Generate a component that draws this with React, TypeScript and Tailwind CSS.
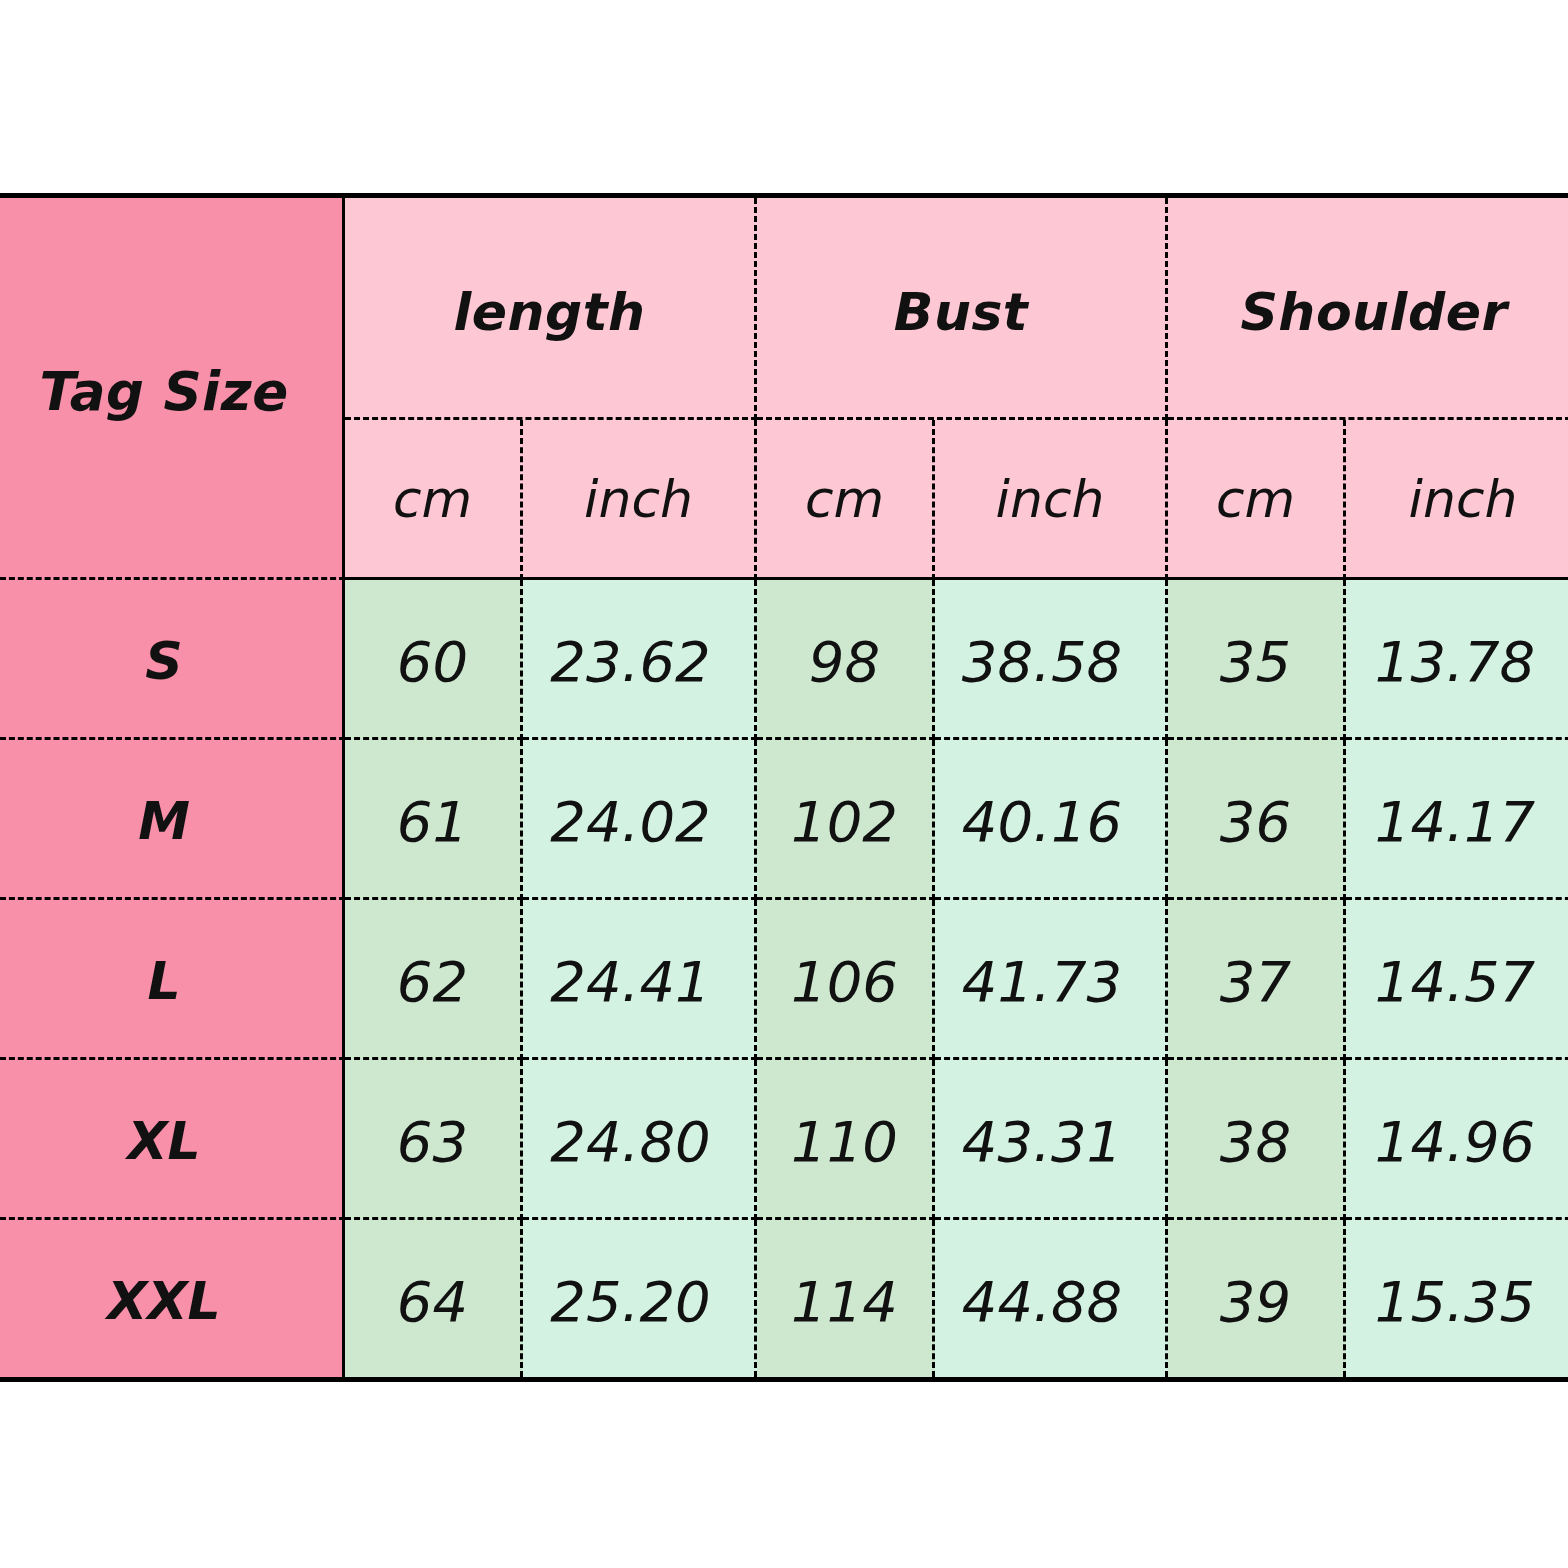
const rows = [
  { tag: "S", v: ["60", "23.62", "98", "38.58", "35", "13.78"] },
  { tag: "M", v: ["61", "24.02", "102", "40.16", "36", "14.17"] },
  { tag: "L", v: ["62", "24.41", "106", "41.73", "37", "14.57"] },
  { tag: "XL", v: ["63", "24.80", "110", "43.31", "38", "14.96"] },
  { tag: "XXL", v: ["64", "25.20", "114", "44.88", "39", "15.35"] },
];

const font = { fontFamily: '"DejaVu Sans", Verdana, sans-serif' };

export default function App() {
  return (
    <div className="w-[1568px] h-[1568px] bg-white overflow-hidden text-[#111]" style={font}>
      <div className="mt-[193px] w-[1580px] border-y-[5px] border-black">
        <div className="grid grid-cols-[345px_178px_234px_178px_233px_178px_234px] grid-rows-[222px_160px_160px_160px_160px_160px_157px]">
          {/* tag size header */}
          <div className="row-span-2 bg-[#f990aa] border-r-[3px] border-b-[3px] border-black [border-right-style:solid] [border-bottom-style:dashed] flex items-center justify-center pt-[8px] pr-[14px]">
            <span className="text-[53px] font-bold italic tracking-[0.5px]">Tag Size</span>
          </div>
          {["length", "Bust", "Shoulder"].map((h, i) => (
            <div
              key={h}
              className={
                "col-span-2 bg-[#fdc8d4] border-b-[3px] border-dashed border-black flex items-center justify-center pt-[8px] " +
                (i < 2 ? "border-r-[3px]" : "")
              }
            >
              <span className="text-[52px] font-bold italic tracking-[0.5px]">{h}</span>
            </div>
          ))}
          {[0, 1, 2, 3, 4, 5].map((i) => (
            <div
              key={i}
              className={
                "bg-[#fdc8d4] border-b-[3px] border-black [border-bottom-style:solid] [border-right-style:dashed] flex items-center justify-center " +
                (i < 5 ? "border-r-[3px]" : "")
              }
            >
              <span className="text-[52px] italic">{i % 2 === 0 ? "cm" : "inch"}</span>
            </div>
          ))}
          {rows.map((r, ri) => (
            <>
              <div
                key={r.tag}
                className={
                  "bg-[#f990aa] border-r-[3px] border-black [border-right-style:solid] [border-bottom-style:dashed] flex items-center justify-center pr-[14px] pt-[4px] " +
                  (ri < rows.length - 1 ? "border-b-[3px]" : "")
                }
              >
                <span className="text-[52px] font-bold italic">{r.tag}</span>
              </div>
              {r.v.map((v, ci) => (
                <div
                  key={r.tag + ci}
                  className={
                    "border-dashed border-black flex items-center justify-center pt-[6px] " +
                    (ci % 2 === 0 ? "bg-[#cde8cf] " : "bg-[#d3f2e2] pr-[16px] ") +
                    (ci < 5 ? "border-r-[3px] " : "") +
                    (ri < rows.length - 1 ? "border-b-[3px]" : "")
                  }
                >
                  <span className="text-[56px] italic">{v}</span>
                </div>
              ))}
            </>
          ))}
        </div>
      </div>
    </div>
  );
}
